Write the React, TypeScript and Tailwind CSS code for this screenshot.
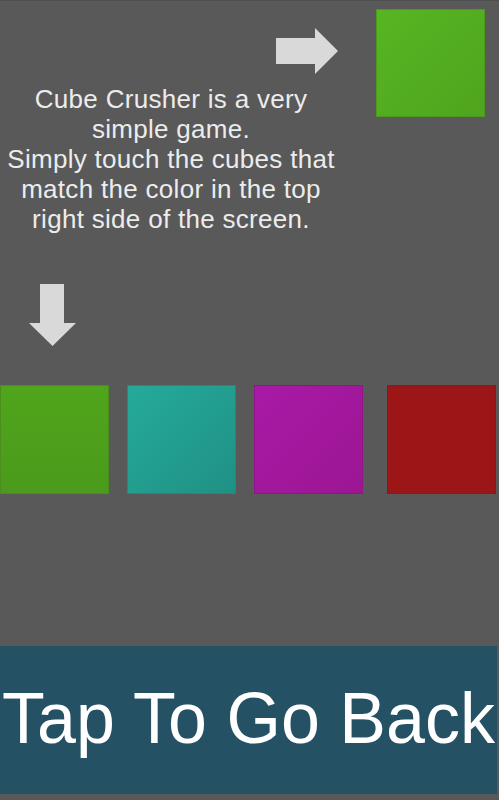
export default function App() {
  return (
    <div
      className="h-[800px] w-[499px] bg-[#595959] flex flex-col overflow-hidden border-t border-[#4f4f4f]"
      style={{ fontFamily: '"Liberation Sans", Arial, sans-serif' }}
    >
      {/* top row: arrow pointing to target cube */}
      <div className="flex items-start h-[117px] pt-[8px]">
        <div className="ml-[276px] mt-[19px]">
          <svg width="62" height="46" viewBox="0 0 62 46">
            <path d="M0 10 H39 V0 L62 23 L39 46 V36 H0 Z" fill="#d9d9d9" />
          </svg>
        </div>
        <div className="ml-[38px] w-[109px] h-[108px] bg-gradient-to-br from-[#58b522] to-[#4fa51e] border border-[#4c9a1d]" />
      </div>

      {/* instructions */}
      <div className="w-[342px] text-center text-[#ececec] text-[26px] tracking-[0.3px] leading-[30px] -mt-[34px]">
        Cube Crusher is a very
        <br />
        simple game.
        <br />
        Simply touch the cubes that
        <br />
        match the color in the top
        <br />
        right side of the screen.
      </div>

      {/* down arrow */}
      <div className="ml-[29px] mt-[50px]">
        <svg width="47" height="62" viewBox="0 0 47 62">
          <path d="M11 0 H35 V39 H47 L23.5 62 L0 39 H11 Z" fill="#d9d9d9" />
        </svg>
      </div>

      {/* cube row */}
      <div className="flex mt-[39px] h-[109px]">
        <div className="w-[109px] h-[109px] bg-gradient-to-b from-[#50a51b] to-[#4b9a1c] border border-[#4a8f1e]" />
        <div className="ml-[18px] w-[109px] h-[109px] bg-gradient-to-br from-[#25aa9a] to-[#1f9184] border border-[#1f8a80]" />
        <div className="ml-[18px] w-[109px] h-[109px] bg-gradient-to-br from-[#a81aa6] to-[#9c1693] border border-[#8f1688]" />
        <div className="ml-[24px] w-[109px] h-[109px] bg-[#9c1517] border border-[#8f1517]" />
      </div>

      <div className="flex-1" />

      {/* back bar */}
      <div className="h-[148px] w-[497px] bg-[#255165] flex items-center justify-center mb-[6px]">
        <span className="text-white text-[70px] leading-none scale-y-[1.04] pb-[4px] whitespace-nowrap">
          Tap To Go Back
        </span>
      </div>
    </div>
  );
}
